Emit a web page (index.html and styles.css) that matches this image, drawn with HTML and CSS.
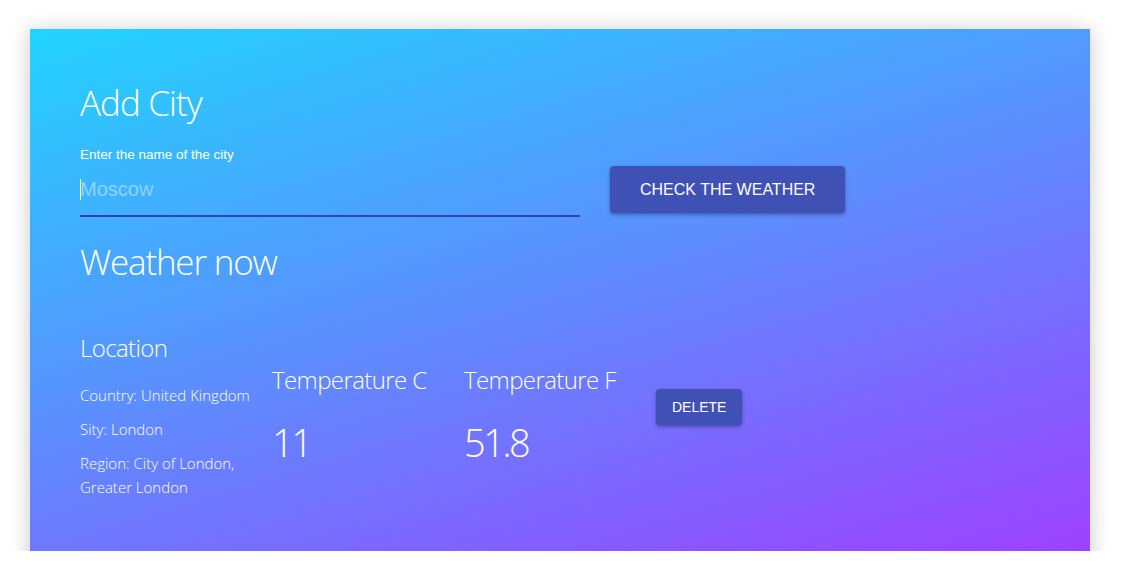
FILE: index.html
```html
<!DOCTYPE html>
<html lang="en">
<head>
<meta charset="utf-8">
<title>Weather</title>
<link rel="stylesheet" href="styles.css">
</head>
<body>
<div class="page">
  <main class="card">
    <h1 class="title">Add City</h1>
    <form class="search">
      <div class="field">
        <label class="field-label" for="city">Enter the name of the city</label>
        <div class="field-input-wrap">
          <span class="caret"></span>
          <input id="city" class="field-input" type="text" placeholder="Moscow">
        </div>
      </div>
      <button type="button" class="btn btn-check">CHECK THE WEATHER</button>
    </form>

    <h1 class="title title-now">Weather now</h1>

    <section class="result">
      <div class="col col-location">
        <h3 class="col-title">Location</h3>
        <p class="info">Country: United Kingdom</p>
        <p class="info">Sity: London</p>
        <p class="info">Region: City of London, Greater London</p>
      </div>
      <div class="col">
        <h3 class="col-title">Temperature C</h3>
        <div class="value">11</div>
      </div>
      <div class="col">
        <h3 class="col-title">Temperature F</h3>
        <div class="value">51.8</div>
      </div>
      <div class="col col-action">
        <button type="button" class="btn btn-delete">DELETE</button>
      </div>
    </section>
  </main>
</div>
</body>
</html>
```
FILE: styles.css
```css
html, body {
  margin: 0;
  padding: 0;
  background: #ffffff;
}

.page {
  height: 551px;
  overflow: hidden;
  padding: 29px 0 0 30px;
  box-sizing: border-box;
}

.card {
  width: 1060px;
  height: 707px;
  box-sizing: border-box;
  padding: 53px 50px 0;
  background: linear-gradient(163deg, #21D4FD 0%, #B721FF 100%);
  box-shadow: 0 2px 20px rgba(0, 0, 0, 0.22);
  font-family: "Open Sans", "Noto Sans", sans-serif;
  color: #ffffff;
}

.title {
  margin: 0;
  font-size: 35px;
  line-height: 42px;
  font-weight: 300;
  letter-spacing: -0.9px;
}

.title-now {
  margin-top: 24px;
  letter-spacing: -1.2px;
}

.search {
  display: flex;
  align-items: flex-end;
  gap: 30px;
  margin: 23px 0 0;
}

.field {
  width: 500px;
  display: flex;
  flex-direction: column;
}

.field-label {
  font-family: "Liberation Sans", Arial, sans-serif;
  font-size: 13.5px;
  line-height: 15px;
  color: #ffffff;
  margin-bottom: 16px;
}

.field-input-wrap {
  position: relative;
}

.field-input {
  display: block;
  width: 100%;
  box-sizing: border-box;
  margin: 0;
  padding: 0 0 14px;
  border: 0;
  border-bottom: 2px solid #3341b3;
  background: transparent;
  outline: none;
  font-family: "Liberation Sans", Arial, sans-serif;
  font-size: 20px;
  line-height: 23px;
  height: 39px;
  color: #ffffff;
}

.field-input::placeholder {
  color: rgba(255, 255, 255, 0.45);
}

.caret {
  position: absolute;
  left: 0;
  top: 1px;
  width: 1px;
  height: 21px;
  background: #ffffff;
}

.btn {
  border: 0;
  border-radius: 4px;
  background: #3f51b5;
  color: #ffffff;
  font-family: "Liberation Sans", Arial, sans-serif;
  box-shadow: 0 2px 4px rgba(0, 0, 0, 0.25), 0 1px 2px rgba(0, 0, 0, 0.15);
  cursor: pointer;
}

.btn-check {
  height: 47px;
  padding: 0 30px;
  font-size: 16px;
  margin-bottom: 4px;
}

.result {
  display: flex;
  align-items: center;
  margin-top: 50px;
}

.col {
  width: 192px;
  flex: none;
}

.col-location {
  padding-bottom: 2px;
}

.col-title {
  margin: 0;
  font-size: 24px;
  line-height: 29px;
  font-weight: 300;
  letter-spacing: -0.6px;
}

.info {
  margin: 10px 0 0;
  font-size: 15px;
  line-height: 24px;
  font-weight: 300;
}

.col-location .col-title + .info {
  margin-top: 21px;
}

.value {
  margin: 25px 0 4px;
  font-size: 38px;
  line-height: 46px;
  font-weight: 300;
  letter-spacing: -2.5px;
}

.col-action {
  width: auto;
}

.btn-delete {
  height: 36px;
  padding: 0 16px;
  font-size: 14px;
  margin-bottom: 21px;
}
```
